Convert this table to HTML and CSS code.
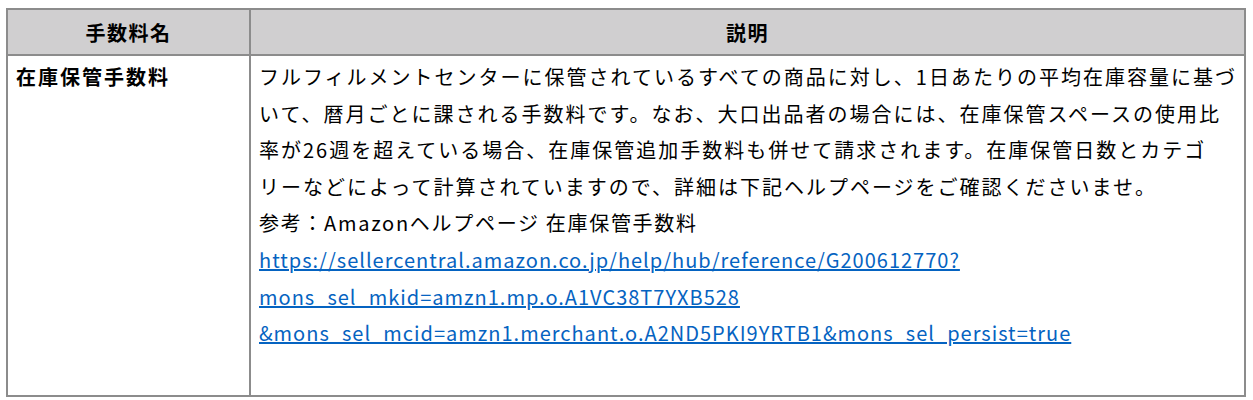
FILE: index.html
```html
<!DOCTYPE html>
<html>
<head>
    <meta charset="utf-8">
    <title>手数料一覧</title>
    <link rel="stylesheet" href="styles.css">
</head>
<body>
    <table class="fee-table">
        <colgroup>
            <col class="col-name">
            <col class="col-desc">
        </colgroup>
        <thead>
            <tr>
                <th>手数料名</th>
                <th>説明</th>
            </tr>
        </thead>
        <tbody>
            <tr>
                <td class="fee-name">在庫保管手数料</td>
                <td class="fee-desc">
                    <p class="desc-text">フルフィルメントセンターに保管されているすべての商品に対し、1日あたりの平均在庫容量に基づ<br>いて、暦月ごとに課される手数料です。なお、大口出品者の場合には、在庫保管スペースの使用比<br>率が26週を超えている場合、在庫保管追加手数料も併せて請求されます。在庫保管日数とカテゴ<br>リーなどによって計算されていますので、詳細は下記ヘルプページをご確認くださいませ。</p>
                    <p class="ref-text">参考：Amazonヘルプページ 在庫保管手数料</p>
                    <a class="ref-link" href="#">https://sellercentral.amazon.co.jp/help/hub/reference/G200612770?<br>mons_sel_mkid=amzn1.mp.o.A1VC38T7YXB528<br>&amp;mons_sel_mcid=amzn1.merchant.o.A2ND5PKI9YRTB1&amp;mons_sel_persist=true</a>
                </td>
            </tr>
        </tbody>
    </table>
</body>
</html>
```

FILE: styles.css
```css
body {
    margin: 0;
    background-color: #ffffff;
    color: #000000;
    font-family: "Noto Sans CJK JP", "Noto Sans", sans-serif;
    font-size: 20px;
}
.fee-table {
    margin: 8px 0 0 6px;
    width: 1240px;
    border-collapse: collapse;
    table-layout: fixed;
}
.col-name {
    width: 243px;
}
.fee-table th,
.fee-table td {
    border: 2px solid #8c8c8c;
    vertical-align: top;
}
.fee-table th {
    background-color: #d0cfd0;
    font-weight: bold;
    height: 44px;
    padding: 0;
    text-align: center;
    vertical-align: middle;
    letter-spacing: 1.5px;
}
.fee-table td {
    height: 336px;
    padding: 3px 8px 0 8px;
    line-height: 36.6px;
}
.fee-name {
    font-weight: bold;
    letter-spacing: 2px;
}
.fee-desc p {
    margin: 0;
}
.desc-text,
.ref-text {
    letter-spacing: 2px;
    white-space: nowrap;
}
.ref-text {
    letter-spacing: 1.7px;
}
.ref-link {
    color: #0563c1;
    text-decoration: underline;
    letter-spacing: 1px;
    white-space: nowrap;
}
```
